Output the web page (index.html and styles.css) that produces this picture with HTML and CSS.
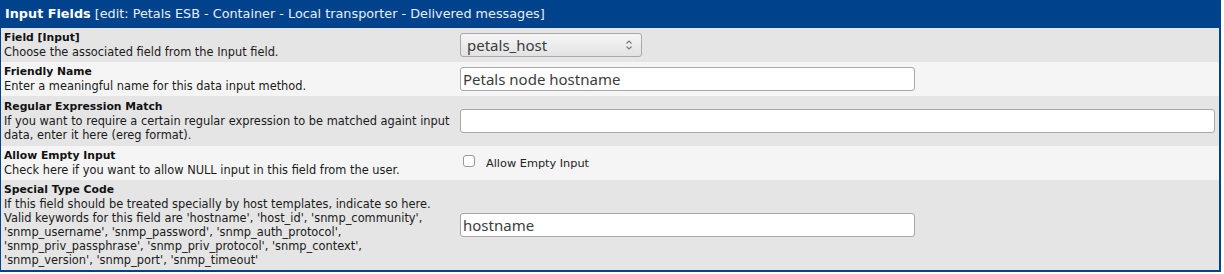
FILE: index.html
```html
<!DOCTYPE html>
<html lang="en">
<head>
    <meta charset="UTF-8">
    <title>Input Fields</title>
    <link rel="stylesheet" href="styles.css">
</head>
<body>
    <table class="form_table">
        <!-- 标题栏 -->
        <tr class="head_row">
            <td colspan="2"><b>Input Fields</b> [edit: Petals ESB - Container - Local transporter - Delivered messages]</td>
        </tr>
        <tr class="row_dark">
            <td class="label_cell">
                <div class="title">Field [Input]</div>
                <div class="desc">Choose the associated field from the Input field.</div>
            </td>
            <td class="field_cell">
                <div class="select_box">
                    <span>petals_host</span>
                    <svg width="8" height="12" viewBox="0 0 8 12"><path d="M1.5 4.5 L4 2 L6.5 4.5" fill="none" stroke="#777" stroke-width="1.1"/><path d="M1.5 7.5 L4 10 L6.5 7.5" fill="none" stroke="#777" stroke-width="1.1"/></svg>
                </div>
            </td>
        </tr>
        <tr class="row_light">
            <td class="label_cell">
                <div class="title">Friendly Name</div>
                <div class="desc">Enter a meaningful name for this data input method.</div>
            </td>
            <td class="field_cell">
                <input class="text_input" type="text" value="Petals node hostname">
            </td>
        </tr>
        <tr class="row_dark tall">
            <td class="label_cell">
                <div class="title">Regular Expression Match</div>
                <div class="desc">If you want to require a certain regular expression to be matched againt input data, enter it here (ereg format).</div>
            </td>
            <td class="field_cell">
                <input class="text_input wide" type="text" value="">
            </td>
        </tr>
        <tr class="row_light">
            <td class="label_cell">
                <div class="title">Allow Empty Input</div>
                <div class="desc">Check here if you want to allow NULL input in this field from the user.</div>
            </td>
            <td class="field_cell">
                <label class="check_label"><span class="check_box"></span>Allow Empty Input</label>
            </td>
        </tr>
        <tr class="row_dark">
            <td class="label_cell">
                <div class="title">Special Type Code</div>
                <div class="desc">If this field should be treated specially by host templates, indicate so here.<br>Valid keywords for this field are 'hostname', 'host_id', 'snmp_community',<br>'snmp_username', 'snmp_password', 'snmp_auth_protocol',<br>'snmp_priv_passphrase', 'snmp_priv_protocol', 'snmp_context',<br>'snmp_version', 'snmp_port', 'snmp_timeout'</div>
            </td>
            <td class="field_cell">
                <input class="text_input" type="text" value="hostname">
            </td>
        </tr>
    </table>
</body>
</html>
```

FILE: styles.css
```css
body{
    margin: 0;
    background-color: #fff;
    font-family: "DejaVu Sans", Verdana, sans-serif;
}
.form_table{
    width: 1221px;
    border-collapse: collapse;
    border-style: solid;
    border-color: #00438c;
    border-width: 0 2px 2px 1px;
    font-size: 11.4px;
    color: #111;
}
.form_table td{
    padding: 0;
    vertical-align: middle;
}
.head_row td{
    background-color: #00438c;
    color: #e8eef6;
    font-size: 12.8px;
    height: 27px;
    padding: 0 4px;
    line-height: 28px;
}
.head_row b{
    color: #fff;
}
.row_dark td{
    background-color: #e5e5e5;
}
.row_light td{
    background-color: #f5f5f5;
}
.label_cell{
    width: 449px;
    padding: 3px 2px 3px 3px !important;
}
.tall .label_cell{
    padding-top: 4px !important;
    padding-bottom: 4px !important;
}
.title{
    font-weight: bold;
    font-size: 10.8px;
    line-height: 14px;
}
.desc{
    line-height: 14px;
    color: #1a1a1a;
}
.field_cell{
    padding: 0 4px 0 5px !important;
}
.text_input{
    display: block;
    box-sizing: border-box;
    width: 455px;
    height: 24px;
    margin: 0;
    padding: 0 2px;
    border: 1px solid #a8a8a8;
    border-radius: 3px;
    background-color: #fff;
    font-family: "Noto Sans", "Open Sans", sans-serif;
    font-size: 15px;
    color: #3c3c3c;
    outline: none;
}
.text_input.wide{
    width: 755px;
}
.select_box{
    box-sizing: border-box;
    display: flex;
    align-items: center;
    justify-content: space-between;
    width: 182px;
    height: 24px;
    margin-top: -1px;
    padding: 0 8px 0 6px;
    border: 1px solid #a8a8a8;
    border-radius: 3px;
    background: linear-gradient(#f6f6f6, #e2e2e2);
    font-family: "Noto Sans", "Open Sans", sans-serif;
    font-size: 15px;
    color: #3c3c3c;
}
.check_label{
    display: flex;
    align-items: center;
    gap: 11px;
    padding-left: 3px;
    font-size: 11.3px;
    color: #222;
}
.check_box{
    box-sizing: border-box;
    width: 12px;
    height: 12px;
    border: 1px solid #999;
    border-radius: 3px;
    background-color: #fff;
    margin-top: -5px;
}
```
